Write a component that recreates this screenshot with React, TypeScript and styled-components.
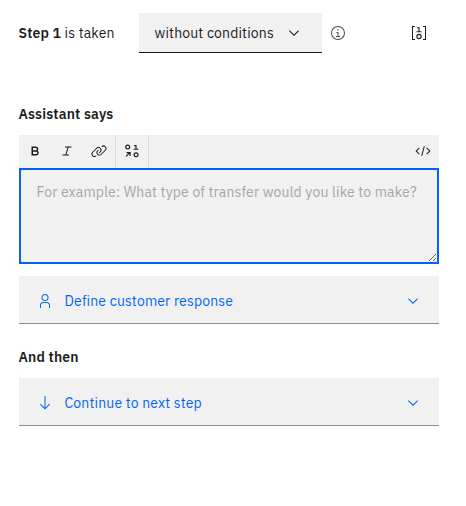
import React from "react";
import styled, { createGlobalStyle } from "styled-components";

const GlobalStyle = createGlobalStyle`
  * { box-sizing: border-box; }
  body { margin: 0; background: #fff; }
  button, textarea { border: 0; border-radius: 0; margin: 0; padding: 0; font: inherit; color: inherit; }
`;

const Panel = styled.main`
  width: 466px;
  height: 506px;
  padding: 13px 27px 0 19px;
  color: #1c1c1c;
  font: 400 14px/20px "IBM Plex Sans", Roboto, sans-serif;
  letter-spacing: 0.16px;
`;
const StepHeader = styled.header`
  display: flex;
  align-items: center;
  height: 40px;
`;
const StepLabel = styled.div`
  width: 120.5px;
  margin-left: -0.5px;
  white-space: nowrap;
`;
const Strong = styled.strong`
  font-weight: 600;
`;
const ConditionSelect = styled.button`
  display: flex;
  align-items: center;
  justify-content: space-between;
  width: 183px;
  height: 40px;
  padding: 0 20px 0 15.5px;
  background: #f1f1f1;
  border-bottom: 1px solid #161616;
  letter-spacing: 0.16px;
`;
const InfoSlot = styled.div`
  display: flex;
  flex: 1;
  padding-left: 8px;
  color: #4a4a4a;
`;
const VariableSlot = styled.div`
  display: flex;
  padding-right: 12px;
`;
const Heading = styled.h2<{ $top: number }>`
  margin: ${(p) => p.$top}px 0 11px -0.5px;
  font-size: 14px;
  line-height: 20px;
  font-weight: 600;
`;
const Toolbar = styled.div`
  display: flex;
  width: 420px;
  height: 33px;
  background: #f1f1f1;
`;
const Tool = styled.button<{ $divided?: boolean; $end?: boolean }>`
  display: flex;
  align-items: center;
  justify-content: center;
  width: ${(p) => (p.$divided ? 34 : 32)}px;
  height: 33px;
  padding-bottom: 1px;
  background: transparent;
  margin-left: ${(p) => (p.$end ? "auto" : 0)};
  border: solid #dcdcdc;
  border-width: ${(p) => (p.$divided ? "0 1px" : 0)};
`;
const Message = styled.textarea`
  display: block;
  width: 420px;
  height: 96px;
  padding: 12px 15.5px;
  border: 2px solid #0560fd;
  background: #f1f1f1;
  outline: none;
  resize: vertical;
  letter-spacing: 0.16px;
  overflow: hidden;
  &::placeholder { color: #a6a6a6; opacity: 1; }
`;
const Action = styled.button<{ $top: number }>`
  display: flex;
  align-items: center;
  width: 420px;
  height: 48px;
  margin-top: ${(p) => p.$top}px;
  padding: 2px 18px 0;
  background: #f1f1f1;
  border-bottom: 1px solid #8d8d8d;
  color: #0066fa;
  letter-spacing: 0.16px;
`;
const ActionText = styled.span`
  flex: 1;
  padding-left: 11.5px;
  text-align: left;
`;
const Glyph = styled.svg`
  display: block;
  flex: none;
  width: 16px;
  height: 16px;
  fill: currentColor;
`;

const Icon = ({ d, children }: { d?: string; children?: React.ReactNode }) => (
  <Glyph viewBox="0 0 32 32">
    {d && <path d={d} />}
    {children}
  </Glyph>
);

const chevron = "M16 22 6 12l1.4-1.4 8.6 8.6 8.6-8.6L26 12z";
const info =
  "M17 22v-8h-4v2h2v6h-3v2h8v-2zM16 8a1.5 1.5 0 1 0 1.5 1.5A1.5 1.5 0 0 0 16 8zM16 30a14 14 0 1 1 14-14 14 14 0 0 1-14 14zm0-26a12 12 0 1 0 12 12A12 12 0 0 0 16 4z";
const bold =
  "M18.25 25H9V7h8.5a5.25 5.25 0 0 1 4 8.65A5.25 5.25 0 0 1 18.25 25ZM12 22h6.23a2.25 2.25 0 1 0 0-4.5H12Zm0-7.5h5.5a2.25 2.25 0 1 0 0-4.5H12Z";
const italic = "M25 9V7H12v2h5.14l-4.37 14H7v2h13v-2h-5.14l4.37-14z";
const link =
  "M29.25 6.76a6 6 0 0 0-8.5 0l1.42 1.42a4 4 0 1 1 5.67 5.67l-8 8a4 4 0 1 1-5.67-5.66l1.41-1.42-1.41-1.42-1.42 1.42a6 6 0 0 0 0 8.5A6 6 0 0 0 17 25a6 6 0 0 0 4.27-1.76l8-8A6 6 0 0 0 29.25 6.76ZM4.19 24.82a4 4 0 0 1 0-5.67l8-8a4 4 0 0 1 5.67 0A3.94 3.94 0 0 1 19 14a4 4 0 0 1-1.17 2.85L15.71 19l1.42 1.42 2.12-2.12a6 6 0 0 0-8.51-8.51l-8 8a6 6 0 0 0 0 8.51A6 6 0 0 0 7 28a6.07 6.07 0 0 0 4.28-1.76l-1.42-1.42A4 4 0 0 1 4.19 24.82Z";
const code =
  "M31 16l-7 7-1.41-1.41L28.17 16l-5.58-5.59L24 9zM1 16l7-7 1.41 1.41L3.83 16l5.58 5.59L8 23z";
const user =
  "M16 4a5 5 0 1 1-5 5 5 5 0 0 1 5-5m0-2a7 7 0 1 0 7 7 7 7 0 0 0-7-7zM26 30h-2v-5a5 5 0 0 0-5-5h-6a5 5 0 0 0-5 5v5H6v-5a7 7 0 0 1 7-7h6a7 7 0 0 1 7 7z";
const arrow = "M24.59 17.59 17 25.17V2h-2v23.17l-7.59-7.58L6 19l10 10 10-10z";

const Strokes = styled.g`
  fill: none;
  stroke: currentColor;
  stroke-width: 2.3;
`;

const VariableIcon = () => (
  <Icon d="M2 2h6v2H4v24h4v2H2zM24 2h6v28h-6v-2h4V4h-4z">
    <Strokes>
      <path d="M11.8 5.4H16v8M11 13.4h10" />
      <ellipse cx="16" cy="23" rx="4.3" ry="4.3" />
    </Strokes>
  </Icon>
);

const InsertVariableIcon = () => (
  <Icon>
    <Strokes>
      <ellipse cx="7.4" cy="8" rx="3.9" ry="3.9" />
      <path d="M20.4 5.2H24v6.6M19.4 12.4h9.2M4.2 26.6l7.4-7.4M5 19.2h7.2v7" />
      <ellipse cx="24.2" cy="23.6" rx="3.9" ry="3.9" />
    </Strokes>
  </Icon>
);

export default function App() {
  return (
    <>
      <GlobalStyle />
      <Panel>
        <StepHeader>
          <StepLabel>
            <Strong>Step 1</Strong> is taken
          </StepLabel>
          <ConditionSelect>
            without conditions
            <Icon d={chevron} />
          </ConditionSelect>
          <InfoSlot><Icon d={info} /></InfoSlot>
          <VariableSlot><VariableIcon /></VariableSlot>
        </StepHeader>

        <Heading $top={51}>Assistant says</Heading>
        <Toolbar>
          <Tool aria-label="Bold"><Icon d={bold} /></Tool>
          <Tool aria-label="Italic"><Icon d={italic} /></Tool>
          <Tool aria-label="Link"><Icon d={link} /></Tool>
          <Tool $divided aria-label="Insert variable"><InsertVariableIcon /></Tool>
          <Tool $end aria-label="Code">
            <Icon d={code}>
              <path d="M5.91 15h20.17v2H5.91z" transform="rotate(-75 16 16)" />
            </Icon>
          </Tool>
        </Toolbar>
        <Message placeholder="For example: What type of transfer would you like to make?" />
        <Action $top={12}>
          <Icon d={user} />
          <ActionText>Define customer response</ActionText>
          <Icon d={chevron} />
        </Action>

        <Heading $top={23}>And then</Heading>
        <Action $top={0}>
          <Icon d={arrow} />
          <ActionText>Continue to next step</ActionText>
          <Icon d={chevron} />
        </Action>
      </Panel>
    </>
  );
}
